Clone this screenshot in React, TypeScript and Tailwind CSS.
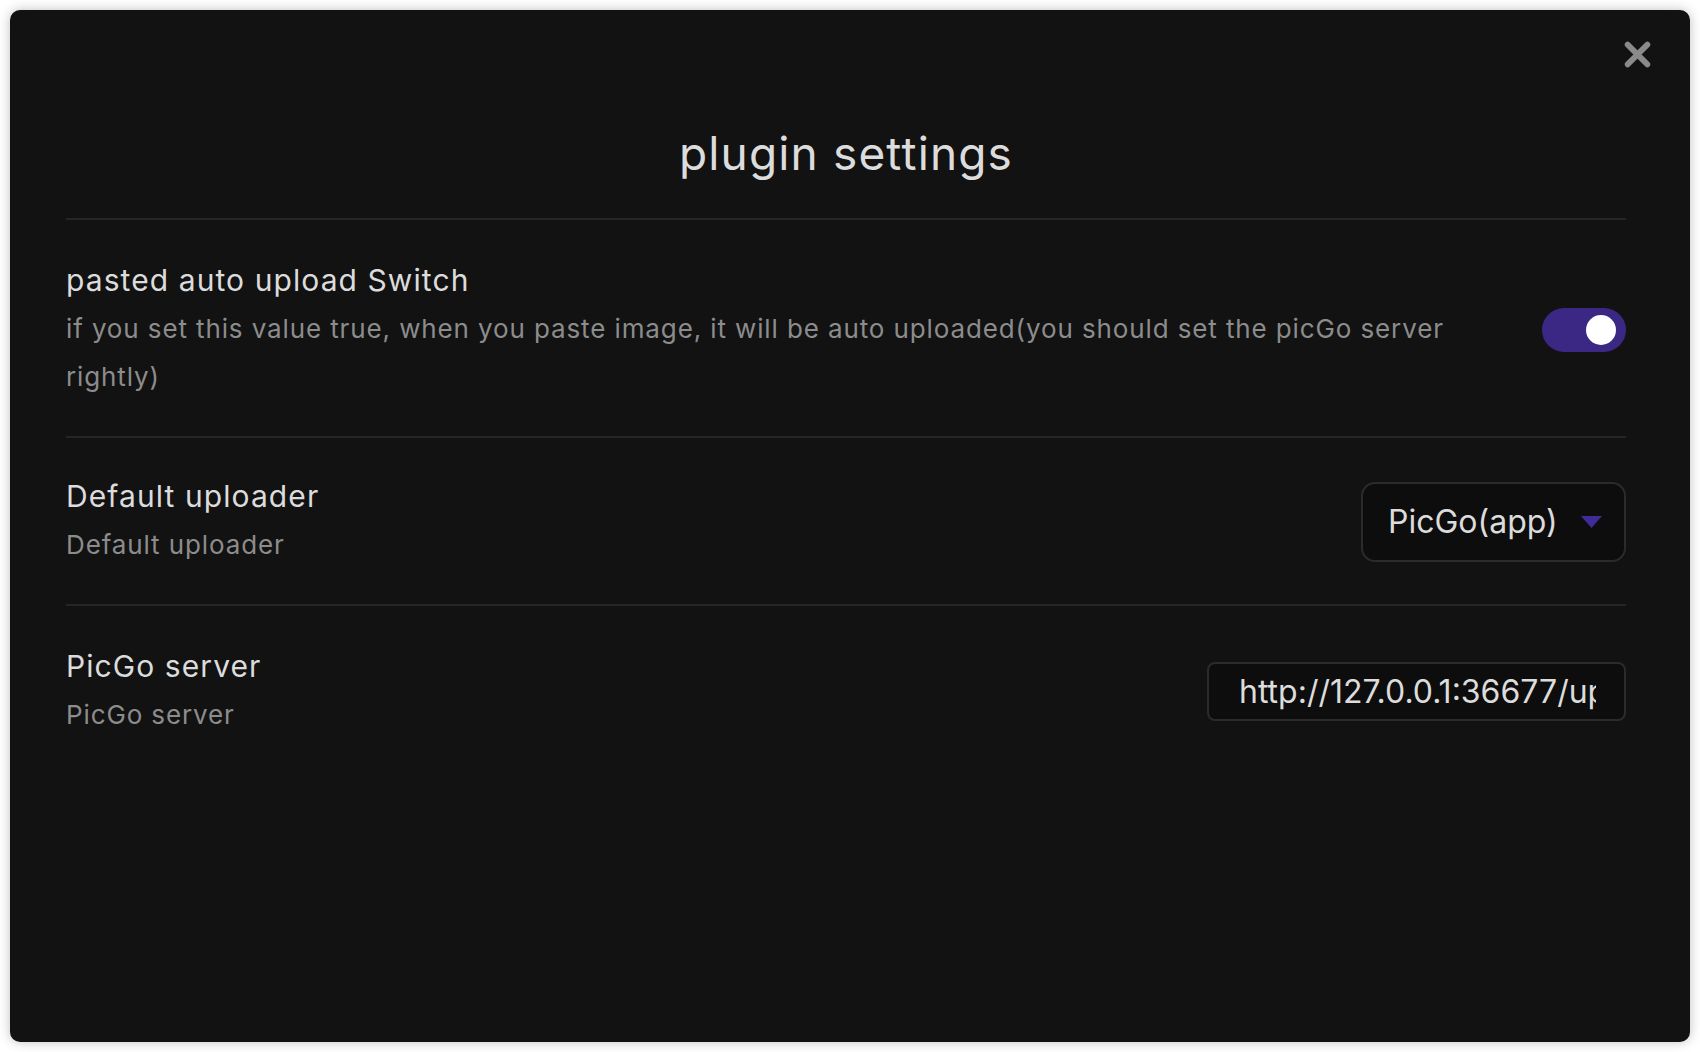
export default function App() {
  return (
    <div className="min-h-screen bg-white p-[10px]" style={{ fontFamily: 'Inter, "Noto Sans", sans-serif' }}>
      <div className="relative h-[1032px] rounded-[10px] bg-[#121212] pl-[56px] pr-[64px] pt-[116px] shadow-[0_0_12px_rgba(0,0,0,0.25)]">
        <button className="absolute right-[39px] top-[31px] flex h-[27px] w-[27px] items-center justify-center text-[#8a8a8a]">
          <svg viewBox="0 0 26 26" className="h-[27px] w-[27px]" fill="none" stroke="currentColor" strokeWidth="5.5" strokeLinecap="round">
            <path d="M3.5 3.5 L22.5 22.5 M22.5 3.5 L3.5 22.5" />
          </svg>
        </button>

        <div className="border-b-2 border-[#262626] pb-[37px] text-center text-[46px] leading-[55px] tracking-[0.025em] text-[#dcdcdc]">
          plugin settings
        </div>

        {/* switch */}
        <div className="flex items-center border-b-2 border-[#262626] pb-[35px] pt-[38px]">
          <div className="mr-[26px] flex-1">
            <div className="text-[30px] leading-[44px] tracking-[0.036em] text-[#dcdcdc]">pasted auto upload Switch</div>
            <div className="mt-[3px] text-[26px] leading-[48px] tracking-[0.034em] text-[#8c8c8c]">
              if you set this value true, when you paste image, it will be auto uploaded(you should set the picGo server rightly)
            </div>
          </div>
          <div className="flex h-[44px] w-[84px] shrink-0 items-center justify-end rounded-full bg-[#3a2884] pr-[10px]">
            <div className="h-[30px] w-[30px] rounded-full bg-white" />
          </div>
        </div>

        {/* uploader */}
        <div className="flex items-center border-b-2 border-[#262626] pb-[35px] pt-[36px]">
          <div className="mr-[26px] flex-1">
            <div className="text-[30px] leading-[44px] tracking-[0.036em] text-[#dcdcdc]">Default uploader</div>
            <div className="mt-[3px] text-[26px] leading-[48px] tracking-[0.034em] text-[#8c8c8c]">Default uploader</div>
          </div>
          <div className="flex h-[80px] w-[265px] shrink-0 items-center rounded-[14px] border-2 border-[#2b2b2b] bg-[#0d0d0d] pl-[25px] pr-[22px]">
            <span className="flex-1 text-[32px] text-[#dcdcdc]">PicGo(app)</span>
            <svg viewBox="0 0 21 12" className="h-[12px] w-[21px]">
              <path d="M0 0 L21 0 L10.5 12 Z" fill="#3f2c98" />
            </svg>
          </div>
        </div>

        {/* server */}
        <div className="flex items-center pt-[38px]">
          <div className="mr-[26px] flex-1">
            <div className="text-[30px] leading-[44px] tracking-[0.036em] text-[#dcdcdc]">PicGo server</div>
            <div className="mt-[3px] text-[26px] leading-[48px] tracking-[0.034em] text-[#8c8c8c]">PicGo server</div>
          </div>
          <input
            readOnly
            value="http://127.0.0.1:36677/upload"
            className="h-[59px] w-[419px] shrink-0 rounded-[8px] border-2 border-[#2b2b2b] bg-[#0d0d0d] pl-[30px] pr-[28px] text-[32px] text-[#dcdcdc] outline-none"
          />
        </div>
      </div>
    </div>
  );
}
